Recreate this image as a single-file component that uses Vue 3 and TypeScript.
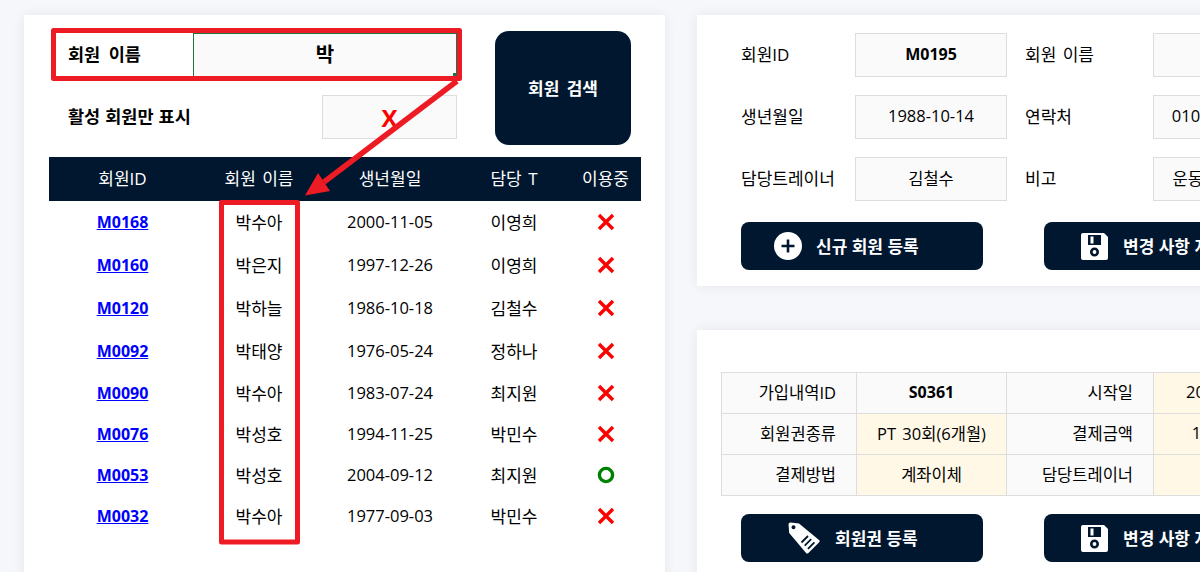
<script setup lang="ts">
interface Member { id: string; name: string; birth: string; trainer: string; active: boolean }

const columns: string[] = ['회원ID', '회원 이름', '생년월일', '담당 T', '이용중']
const members: Member[] = [
  { id: 'M0168', name: '박수아', birth: '2000-11-05', trainer: '이영희', active: false },
  { id: 'M0160', name: '박은지', birth: '1997-12-26', trainer: '이영희', active: false },
  { id: 'M0120', name: '박하늘', birth: '1986-10-18', trainer: '김철수', active: false },
  { id: 'M0092', name: '박태양', birth: '1976-05-24', trainer: '정하나', active: false },
  { id: 'M0090', name: '박수아', birth: '1983-07-24', trainer: '최지원', active: false },
  { id: 'M0076', name: '박성호', birth: '1994-11-25', trainer: '박민수', active: false },
  { id: 'M0053', name: '박성호', birth: '2004-09-12', trainer: '최지원', active: true },
  { id: 'M0032', name: '박수아', birth: '1977-09-03', trainer: '박민수', active: false },
]
const profile = [
  { label: '회원ID', value: 'M0195', strong: true, label2: '회원 이름', value2: '이서준' },
  { label: '생년월일', value: '1988-10-14', strong: false, label2: '연락처', value2: '010-1234-5678' },
  { label: '담당트레이너', value: '김철수', strong: false, label2: '비고', value2: '운동 경력 3년차' },
]
const plans = [
  { l1: '가입내역ID', v1: 'S0361', locked: true, l2: '시작일', v2: '2024-03-15' },
  { l1: '회원권종류', v1: 'PT 30회(6개월)', locked: false, l2: '결제금액', v2: '1,200,000' },
  { l1: '결제방법', v1: '계좌이체', locked: false, l2: '담당트레이너', v2: '김철수' },
]
</script>

<template>
  <div class="page">
    <section class="card list-card">
      <div class="search">
        <div class="filters">
          <div class="filter">
            <span class="filter-label">회원 이름</span>
            <div class="name-input">박<i class="handle"></i></div>
          </div>
          <div class="filter">
            <span class="filter-label tight">활성 회원만 표시</span>
            <div class="active-input">X</div>
          </div>
        </div>
        <button class="search-btn">회원 검색</button>
      </div>
      <table class="members">
        <thead>
          <tr><th v-for="c in columns" :key="c">{{ c }}</th></tr>
        </thead>
        <tbody>
          <tr v-for="m in members" :key="m.id">
            <td><a class="member-link">{{ m.id }}</a></td>
            <td>{{ m.name }}</td>
            <td class="num">{{ m.birth }}</td>
            <td>{{ m.trainer }}</td>
            <td class="mark-cell">
              <svg v-if="m.active" class="mark" viewBox="0 0 18 18"><circle cx="9" cy="9" r="6.600" fill="none" stroke="#008000" stroke-width="3.400" /></svg>
              <svg v-else class="mark" viewBox="0 0 18 18"><path d="M2 2 16 16M16 2 2 16" stroke="#ff0000" stroke-width="3.400" fill="none" /></svg>
            </td>
          </tr>
        </tbody>
      </table>
    </section>

    <div class="side">
      <section class="card profile-card">
        <div class="form">
          <template v-for="r in profile" :key="r.label">
            <span class="form-label">{{ r.label }}</span>
            <div class="box" :class="{ strong: r.strong }">{{ r.value }}</div>
            <span class="form-label">{{ r.label2 }}</span>
            <div class="box">{{ r.value2 }}</div>
          </template>
        </div>
        <div class="actions">
          <button class="action add">
            <svg class="ico-plus" viewBox="0 0 28 28"><circle cx="14" cy="14" r="14" fill="#fff" /><path d="M14 7.500v13M7.500 14h13" stroke="#00172f" stroke-width="2.600" /></svg>
            <span class="action-text">신규 회원 등록</span>
          </button>
          <button class="action save">
            <svg class="ico-disk" viewBox="0 0 27 27"><path fill="#fff" fill-rule="evenodd" d="M2 0h21l4 4v21a2 2 0 0 1-2 2H2a2 2 0 0 1-2-2V2a2 2 0 0 1 2-2ZM7 2v10h13V2ZM9.500 3.500h3v7h-3ZM13.500 14.500a4.500 4.500 0 1 0 0 9 4.500 4.500 0 0 0 0-9Zm0 2.600a1.900 1.900 0 1 1 0 3.800 1.900 1.900 0 0 1 0-3.800Z" /></svg>
            <span class="action-text">변경 사항 저장</span>
          </button>
        </div>
      </section>

      <section class="card plan-card">
        <table class="plans">
          <tbody>
            <tr v-for="p in plans" :key="p.l1">
              <td class="lab">{{ p.l1 }}</td>
              <td :class="p.locked ? 'locked' : 'edit'">{{ p.v1 }}</td>
              <td class="lab">{{ p.l2 }}</td>
              <td class="edit">{{ p.v2 }}</td>
            </tr>
          </tbody>
        </table>
        <div class="actions">
          <button class="action tag">
            <svg class="ico-tag" viewBox="0 0 32 32"><path fill="#fff" fill-rule="evenodd" d="M2.500 0.500 11 1.500 31 18a1.600 1.600 0 0 1 .2 2.200L20.400 31a1.600 1.600 0 0 1-2.300 0L1.200 11 .5 2.500a2 2 0 0 1 2-2ZM5.500 3.200a2 2 0 1 0 0 4 2 2 0 0 0 0-4Z" /><path d="M13.500 20.500 20 14M16.700 23.700l6.500-6.500M19.900 26.900l6.500-6.500" stroke="#00172f" stroke-width="1.800" fill="none" /></svg>
            <span class="action-text">회원권 등록</span>
          </button>
          <button class="action save">
            <svg class="ico-disk" viewBox="0 0 27 27"><path fill="#fff" fill-rule="evenodd" d="M2 0h21l4 4v21a2 2 0 0 1-2 2H2a2 2 0 0 1-2-2V2a2 2 0 0 1 2-2ZM7 2v10h13V2ZM9.500 3.500h3v7h-3ZM13.500 14.500a4.500 4.500 0 1 0 0 9 4.500 4.500 0 0 0 0-9Zm0 2.600a1.900 1.900 0 1 1 0 3.800 1.900 1.900 0 0 1 0-3.800Z" /></svg>
            <span class="action-text">변경 사항 저장</span>
          </button>
        </div>
      </section>
    </div>

    <svg class="annotation" viewBox="0 0 1200 572">
      <g fill="none" stroke="#ed1c24" stroke-width="5" stroke-linejoin="round">
        <rect x="53.500" y="30.500" width="406" height="48" />
        <rect x="221.500" y="202.500" width="76" height="339.500" />
        <path d="M457 81 324 182" stroke-width="5.500" />
      </g>
      <path d="M305 195.500 318 173 330 191Z" fill="#ed1c24" />
    </svg>
  </div>
</template>

<style>
html, body { margin: 0; background: #f6f7fa; }
</style>

<style scoped>
.page {
  position: relative;
  display: flex;
  align-items: flex-start;
  gap: 32px;
  width: 1200px;
  height: 572px;
  padding: 15px 0 0 24px;
  box-sizing: border-box;
  overflow: hidden;
  background: #f6f7fa;
  color: #000;
  font-family: "Open Sans", "Noto Sans CJK KR", sans-serif;
  font-size: 17px;
  word-spacing: 2px;
}
.card {
  flex: none;
  background: #fff;
  box-shadow: 0 0 12px rgba(0, 0, 0, 0.07);
  box-sizing: border-box;
}
.list-card {
  width: 641px;
  height: 620px;
  padding: 16px 24px 0 25px;
}
.search { display: flex; }
.filters {
  width: 408px;
  padding-top: 2px;
  display: flex;
  flex-direction: column;
  gap: 18px;
}
.filter {
  display: flex;
  align-items: center;
  justify-content: space-between;
  height: 44px;
  padding-left: 19px;
}
.filter-label { font-weight: 700; font-size: 17.5px; word-spacing: 4px; padding-bottom: 3px; }
.filter-label.tight { word-spacing: 0.500px; }
.name-input {
  position: relative;
  box-sizing: border-box;
  width: 264px;
  height: 44px;
  border: 1px solid #217346;
  background: #fafafa;
  display: flex;
  align-items: center;
  justify-content: center;
  font-weight: 700;
  font-size: 20px;
  padding-bottom: 4px;
}
.handle {
  position: absolute;
  right: -1px;
  bottom: -1px;
  width: 4px;
  height: 4px;
  background: #217346;
}
.active-input {
  box-sizing: border-box;
  width: 135px;
  height: 44px;
  border: 1px solid #ddd;
  background: #fafafa;
  display: flex;
  align-items: center;
  justify-content: center;
  color: #ff0000;
  font-size: 24px;
  font-weight: 700;
}
.search-btn {
  margin-left: 38px;
  width: 136px;
  height: 114px;
  border: 0;
  border-radius: 14px;
  background: #00172f;
  color: #fff;
  font: inherit;
  font-weight: 700;
  word-spacing: 3px;
  padding: 0 0 1px;
}
.members {
  margin-top: 12px;
  width: 592px;
  border-collapse: collapse;
  table-layout: fixed;
  text-align: center;
}
.members th {
  height: 44px;
  padding: 0 0 4px;
  box-sizing: border-box;
  background: #00172f;
  color: #fff;
  font-weight: 400;
}
.members th:nth-child(1) { width: 147px; }
.members th:nth-child(2) { width: 126px; }
.members th:nth-child(3) { width: 136px; }
.members th:nth-child(4) { width: 112px; }
.members td { height: 41px; padding: 0 0 3px; box-sizing: border-box; }
.members td.mark-cell { padding: 0 0 1px; }
.members tr:nth-child(-n+4) td { height: 43px; }
.members .num { font-size: 16.5px; }
.member-link { color: #0000ff; font-weight: 700; font-size: 16px; text-decoration: underline; }
.mark { display: block; width: 18px; height: 18px; margin: 0 auto; }

.side {
  flex: none;
  width: 640px;
  display: flex;
  flex-direction: column;
  gap: 44px;
}
.profile-card { height: 271px; padding: 18px 0 0 44px; }
.form {
  display: grid;
  grid-template-columns: 114px 152px 146px 152px;
  grid-auto-rows: 44px;
  row-gap: 18px;
  align-items: center;
}
.form-label { padding-bottom: 4px; }
.form-label:nth-child(4n+3) { margin-left: 18px; }
.box {
  box-sizing: border-box;
  height: 44px;
  padding-bottom: 3px;
  border: 1px solid #ddd;
  background: #fafafa;
  display: flex;
  align-items: center;
  justify-content: center;
  white-space: nowrap;
  overflow: hidden;
  font-size: 16.5px;
}
.strong { font-weight: 700; font-size: 16px; }
.actions { display: flex; gap: 61px; margin-top: 21px; }
.action {
  width: 242px;
  height: 48px;
  border: 0;
  border-radius: 8px;
  background: #00172f;
  color: #fff;
  font: inherit;
  font-weight: 700;
  display: flex;
  align-items: center;
  gap: 14px;
  padding: 0;
  white-space: nowrap;
}
.action-text { padding-bottom: 2px; }
.action.add { padding-left: 33px; }
.action.save { padding-left: 37px; gap: 15px; }
.action.tag { padding-left: 47px; gap: 15px; }
.ico-plus { width: 28px; height: 28px; }
.ico-disk { width: 27px; height: 27px; }
.ico-tag { width: 32px; height: 32px; }
.plan-card { height: 260px; padding: 42px 0 0 24px; }
.plan-card .actions { margin: 18px 0 0 20px; }
.plans {
  width: 584px;
  border-collapse: collapse;
  table-layout: fixed;
}
.plans td {
  height: 41px;
  padding: 0 0 3px;
  border: 1px solid #ddd;
  text-align: center;
  white-space: nowrap;
  box-sizing: border-box;
  font-size: 16.5px;
}
.plans td:nth-child(1) { width: 135px; }
.plans td:nth-child(2) { width: 150px; }
.plans td:nth-child(3) { width: 147px; }
.plans .lab { background: #fafafa; text-align: right; padding-right: 20px; }
.plans .locked { background: #fafafa; font-weight: 700; font-size: 16px; }
.plans .edit { background: #fff8e7; }
.annotation {
  position: absolute;
  left: 0;
  top: 0;
  width: 1200px;
  height: 572px;
  pointer-events: none;
}
</style>
